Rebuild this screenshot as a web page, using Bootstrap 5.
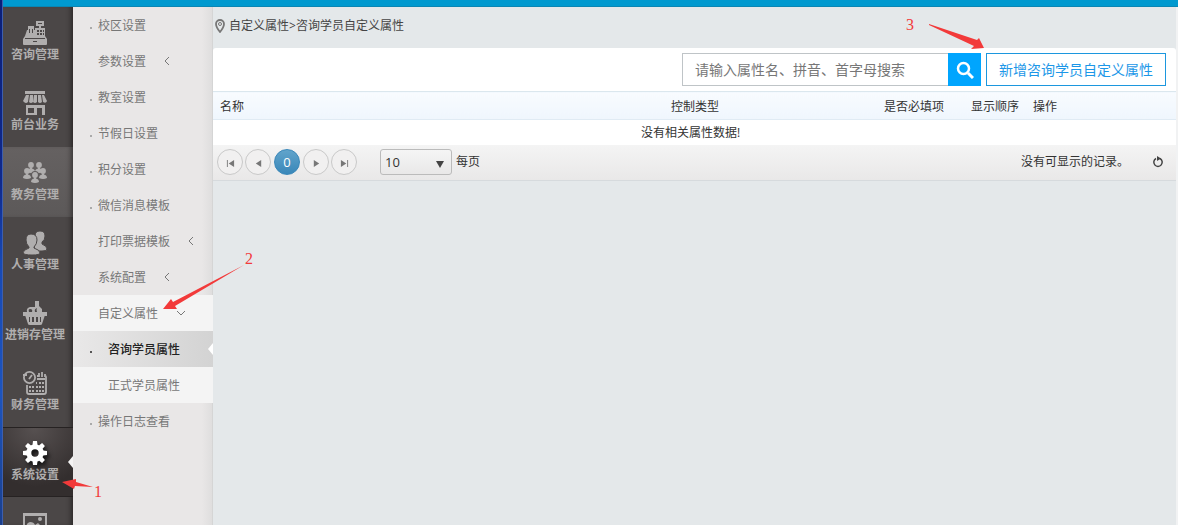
<!DOCTYPE html>
<html lang="zh-CN">
<head>
<meta charset="utf-8">
<meta name="viewport" content="width=device-width, initial-scale=1">
<title>自定义属性</title>
<link href="https://cdn.jsdelivr.net/npm/bootstrap@5.3.0/dist/css/bootstrap.min.css" rel="stylesheet">
<style>
body{font:12px/20px "Open Sans","Noto Sans CJK SC",sans-serif;color:#333;background:#e4e8ea}
a{text-decoration:none;color:inherit}
.desk-edge{width:3px;background:linear-gradient(90deg,transparent 2px,#3d5fae 2px),linear-gradient(#0b1f78,#10298c 35%,#1749b4 50%,#1c54bd 75%,#1a3f8c)}
.top-strip{height:7px;background:#0099cf;border-bottom:1px solid #0a86b3}
.rail{width:70px;background:#4b4747;box-shadow:inset -5px 0 5px -3px #2b2828}
.rail a{height:70px;padding:14px 6px 0 0;color:#b0aeae;font-weight:700;position:relative;white-space:nowrap}
.rail a svg{width:24px;height:24px;fill:currentColor;flex:none;margin-bottom:2px;overflow:visible}
.rail a span{line-height:16px}
.rail .hovered{background:linear-gradient(#656161,#5c5959);box-shadow:inset -5px 0 5px -3px #393636}
.rail .current{background:radial-gradient(circle at 45% 0,#575151,#332e2e 75%);border-top:1px solid #262222;border-bottom:1px solid #262222;padding-top:13px}
.rail .current svg{color:#fff;filter:drop-shadow(2px 3px 2px #111)}
.notch::after{content:"";position:absolute;right:0;top:50%;margin-top:-6px;border:6px solid transparent;border-left:0;border-right:5px solid #f4f3f3}
.submenu{width:140px;background:linear-gradient(90deg,#e9e7e7 92%,#dedddd);box-shadow:inset -1px 0 #d5d5d5}
.submenu a{height:36px;padding:2px 0 0 25px;color:#777;position:relative}
.submenu a.dot::before{content:"";position:absolute;left:17px;top:20px;width:2px;height:2px;background:#aaa}
.submenu svg{width:6px;height:10px;margin:0 0 2px 18px;fill:none;stroke:#777}
.submenu svg.down{width:10px;height:6px}
.submenu .open{background:#f4f4f4}
.submenu .child{padding-left:35px}
.submenu .picked{background:linear-gradient(90deg,#e9e8e8,#d3d3d3);color:#222;font-weight:500}
.submenu a.picked::before{background:#555}
.submenu .notch::after{border-right-color:#fff}
.content-area{border-right:2px solid #f1f2f3}
.crumbs{height:41px;padding:0 0 4px 2px;color:#444}
.panel{background:#fff;border-top-left-radius:3px;border-top-right-radius:3px}
.tools{padding:5px 10px 5px 0;gap:5px}
.find{width:299px;height:33px}
.find input{border:1px solid #bfc4c7;border-right:0;border-radius:0;font-size:14px;padding:0 12px;color:#333}
.find input::placeholder{color:#777;opacity:1}
.find button{width:33px;background:#00a5fe;border:0;border-radius:0;padding:0}
.add{height:33px;width:180px;border:1px solid #1c97de;border-radius:0;color:#1c97e8;font-size:14px;padding:0;white-space:nowrap;background:#fff}
.grid-list{table-layout:fixed;width:100%}
.grid-list th{height:28px;padding:2px 7px 0;font-weight:400;background:linear-gradient(#f8fbff,#eff6fd);border-top:1px solid #dbe7ee;border-bottom:1px solid #e0ebf4;white-space:nowrap}
.grid-list td{height:25px;text-align:center;padding:2px 8px 0 0}
.w-type{width:213px}.w-need{width:87px}.w-order{width:62px}.w-act{width:150px}
.pager{height:36px;padding:0 12px 0 4px;background:linear-gradient(#f4f4f4,#e9e8e8);border-bottom:1px solid #d6dadd}
.rounds{gap:2px}
.rounds button{width:26px;height:26px;border:1px solid #c9c9c9;border-radius:50%;background:#f1f0f0;padding:2px 0 0}
.rounds svg{fill:#777;width:9px;height:9px;display:block;margin:0 auto}
.rounds .now{background:linear-gradient(#61a4cb,#3987b9);border-color:#3987b9;color:#fff;font-size:13px;margin:0 1px;padding:0}
.sizes{margin:0 4px 0 23px;position:relative}
.sizes select{appearance:none;display:block;width:72px;height:26px;border:1px solid #bbb;border-radius:3px;background:linear-gradient(#f5f5f5,#e9e8e8);font-size:13px;padding:0 4px;color:#333}
.sizes svg{position:absolute;right:8px;top:11px;fill:#444;pointer-events:none}
.reload{border:0;background:none;padding:0;margin-left:23px;line-height:12px}
.notes{position:absolute;left:0;top:0;pointer-events:none;fill:#f23a3a;font:16px "Liberation Serif","Noto Sans CJK SC",serif}
</style>
</head>
<body>
<div class="d-flex vh-100 overflow-hidden position-relative">
  <div class="desk-edge flex-shrink-0"></div>
  <div class="d-flex flex-column flex-grow-1">
    <header class="top-strip flex-shrink-0"></header>
    <div class="d-flex flex-grow-1 overflow-hidden">
      <nav class="rail flex-shrink-0" aria-label="主菜单">
        <a href="#" class="d-flex flex-column align-items-center"><svg viewBox="0 0 24 24"><path fill-rule="evenodd" d="M13 0h8v5h-3v2h4v8l2 3v5q0 1-1 1H1q-1 0-1-1v-5l2-3 2-6h1V5h6v4h1V7h4V5h-3zM15 2v1h4V2zM6 8v4h1V8zm3 0v4h1V8zM14 9v2h2V9zm3 0v2h2V9zm3 0v2h1V9zM14 12v2h2v-2zm3 0v2h2v-2zm3 0v2h1v-2zM2 17v1h20v-1zM10 20v1h4v-1z"/></svg><span>咨询管理</span></a>
        <a href="#" class="d-flex flex-column align-items-center"><svg viewBox="0 0 24 24"><path fill-rule="evenodd" d="M2 0h20v3H2zM3 4h3l-1 7q-2 2-4 0l-1-1zM7 4h3v7q-2 2-4 0zM11 4h3v7q-2 2-4 0zM15 4h3l1 7q-2 2-4 0zM19 4h2l3 6q-1 3-4 1zM3 14h19v10h-3v-7h-5v7H3zM5 17v5h6v-5z"/></svg><span>前台业务</span></a>
        <a href="#" class="hovered d-flex flex-column align-items-center"><svg viewBox="0 0 24 24"><defs><g id="person"><circle cx="0" cy="3" r="2.900"/><path d="M-4 10q0-3 3-3.500v-1h2v1q3 .5 3 3.500-4 2-8 0z"/></g></defs><use href="#person" x="8" y="1"/><use href="#person" x="16" y="1"/><use href="#person" x="4" y="7"/><use href="#person" x="20" y="7"/><use href="#person" x="12" y="11" stroke="#605c5c" stroke-width="2"/><use href="#person" x="12" y="11"/></svg><span>教务管理</span></a>
        <a href="#" class="d-flex flex-column align-items-center"><svg viewBox="0 0 24 24" stroke="#4b4747"><path d="M12 5q0-5 5-5t5 5q0 4-3 6v2q5 2 5 5 0 2-5 2h-8z"/><path d="M3 9q0-6 5-6 6 0 6 6 0 4-3 7v1q6 2 6 5 0 2-8 2t-9-2q0-3 6-5v-1Q3 13 3 9z"/></svg><span>人事管理</span></a>
        <a href="#" class="d-flex flex-column align-items-center"><svg viewBox="0 0 24 24"><path fill-rule="evenodd" d="M12 0h4v5l3 3v3H4q-1-4 3-5h5zM7 8q-2 0-1 3h3q1-3-2-3zM14 7q-3 1-2 4h2q-1-2 0-4zM0 11h24v4H0z"/><path fill-rule="evenodd" d="M2 14h20l-3 9q0 1-2 1H7q-2 0-2-1zM6 16v5h1v-5zm3 0v5h2v-5zm4 0v5h2v-5zm4 0v5h1v-5z"/></svg><span>进销存管理</span></a>
        <a href="#" class="d-flex flex-column align-items-center"><svg viewBox="0 0 24 24"><g fill="none" stroke="currentColor" stroke-width="1.800"><circle cx="6.500" cy="6.500" r="5.600"/><path d="M0 4h4M6 8l3-4M4 14v7q0 2 2 2h15q2 0 2-2V6q0-1-1-1M14 5h2M16 2v4M19 1v5M22 3v3"/></g><path d="M14 7h8v2h-8zM13 11h1v2h-1zm3 0h2v2h-2zm3 0h2v2h-2zM6 15h2v2H6zm3 0h2v2H9zm4 0h2v2h-2zm3 0h2v2h-2zm3 0h2v2h-2zM6 19h2v2H6zm3 0h2v2H9zm4 0h2v2h-2zm3 0h2v2h-2zm3 0h2v2h-2z"/></svg><span>财务管理</span></a>
        <a href="#" class="current notch d-flex flex-column align-items-center"><svg viewBox="0 0 24 24"><circle cx="12" cy="12" r="6.200" fill="none" stroke="currentColor" stroke-width="5"/><g id="teeth"><path id="tooth" d="M9.500 4L10 0h4l.5 4zM9.500 20l.5 4h4l.5-4z"/><use href="#tooth" transform="rotate(90 12 12)"/></g><use href="#teeth" transform="rotate(45 12 12)"/></svg><span>系统设置</span></a>
        <a href="#" class="d-flex flex-column align-items-center" aria-label="图片"><svg viewBox="0 0 24 24"><path fill-rule="evenodd" d="M0 2h24v22H0zM2 5v16h20V5z"/><circle cx="17" cy="8" r="2"/><path d="M3 17q0-5 4-6 4 0 5 3l3-2 6 6v2H3z"/></svg></a>
      </nav>
      <nav class="submenu flex-shrink-0" aria-label="系统设置">
        <a href="#" class="dot d-flex align-items-center">校区设置</a>
        <a href="#" class="d-flex align-items-center">参数设置<svg viewBox="0 0 6 10"><path d="M5 1L1 5l4 4"/></svg></a>
        <a href="#" class="dot d-flex align-items-center">教室设置</a>
        <a href="#" class="dot d-flex align-items-center">节假日设置</a>
        <a href="#" class="dot d-flex align-items-center">积分设置</a>
        <a href="#" class="dot d-flex align-items-center">微信消息模板</a>
        <a href="#" class="d-flex align-items-center">打印票据模板<svg viewBox="0 0 6 10"><path d="M5 1L1 5l4 4"/></svg></a>
        <a href="#" class="d-flex align-items-center">系统配置<svg viewBox="0 0 6 10"><path d="M5 1L1 5l4 4"/></svg></a>
        <a href="#" class="open d-flex align-items-center">自定义属性<svg class="down" viewBox="0 0 10 6"><path d="M1 1l4 4 4-4"/></svg></a>
        <a href="#" class="child picked dot notch d-flex align-items-center">咨询学员属性</a>
        <a href="#" class="open child d-flex align-items-center">正式学员属性</a>
        <a href="#" class="dot d-flex align-items-center">操作日志查看</a>
      </nav>
      <main class="content-area flex-grow-1">
        <div class="crumbs d-flex align-items-center"><svg class="me-1" width="10" height="14" viewBox="0 0 10 14" fill="none" stroke="#777"><path stroke-width="1.800" d="M5 13Q1 8 1 5a4 4 0 0 1 8 0q0 3-4 8z"/><circle cx="5" cy="5" r="1.500"/></svg><a href="#">自定义属性</a>&gt;<span>咨询学员自定义属性</span></div>
        <section class="panel">
          <div class="tools d-flex justify-content-end">
            <form class="find d-flex">
              <input class="form-control flex-grow-1" type="text" aria-label="搜索属性" placeholder="请输入属性名、拼音、首字母搜索">
              <button class="btn flex-shrink-0 d-flex align-items-center justify-content-center" type="button" aria-label="搜索"><svg width="18" height="18" viewBox="0 0 18 18" fill="none" stroke="#fff"><circle cx="7.500" cy="7.500" r="5.500" stroke-width="2.500"/><path d="M12 12l5 5" stroke-width="3"/></svg></button>
            </form>
            <button class="btn add" type="button">新增咨询学员自定义属性</button>
          </div>
          <table class="grid-list">
            <thead><tr><th>名称</th><th class="w-type">控制类型</th><th class="w-need">是否必填项</th><th class="w-order">显示顺序</th><th class="w-act">操作</th></tr></thead>
            <tbody><tr><td colspan="5">没有相关属性数据!</td></tr></tbody>
          </table>
          <div class="pager d-flex align-items-center">
            <div class="rounds d-flex">
              <button type="button" aria-label="首页"><svg viewBox="0 0 10 10"><path d="M1 1h1v8H1zM9 1v8L3 5z"/></svg></button>
              <button type="button" aria-label="上一页"><svg viewBox="0 0 10 10"><path d="M8 1v8L2 5z"/></svg></button>
              <button type="button" class="now">0</button>
              <button type="button" aria-label="下一页"><svg viewBox="0 0 10 10"><path d="M2 1v8l6-4z"/></svg></button>
              <button type="button" aria-label="末页"><svg viewBox="0 0 10 10"><path d="M8 1h1v8H8zM1 1v8l6-4z"/></svg></button>
            </div>
            <div class="sizes"><select id="size"><option>10</option><option>20</option><option>50</option></select><svg width="8" height="8" viewBox="0 0 8 8"><path d="M0 1h8L4 8z"/></svg></div>
            <label for="size">每页</label>
            <span class="ms-auto">没有可显示的记录。</span>
            <button class="reload" type="button" aria-label="刷新"><svg width="12" height="12" viewBox="0 0 12 12"><path fill="none" stroke="#444" stroke-width="1.500" d="M4 2.500a4.200 4.200 0 1 0 4 0"/><path fill="#444" d="M5 0l4 2.500L5 5z"/></svg></button>
          </div>
        </section>
      </main>
    </div>
  </div>
  <svg class="notes" width="1178" height="525" viewBox="0 0 1178 525">
    <path d="M93 487L75 486 74 489 62 482 76 479 76 482z"/><text x="94" y="497">1</text>
    <path d="M244 265L175 306 177 309 163 309 171 299 173 302z"/><text x="245" y="264">2</text>
    <path d="M929 24L977 40 979 38 984 48 971 49 974 46 929 25z"/><text x="906" y="30">3</text>
  </svg>
</div>
<script src="https://cdn.jsdelivr.net/npm/bootstrap@5.3.0/dist/js/bootstrap.bundle.min.js"></script>
</body>
</html>
